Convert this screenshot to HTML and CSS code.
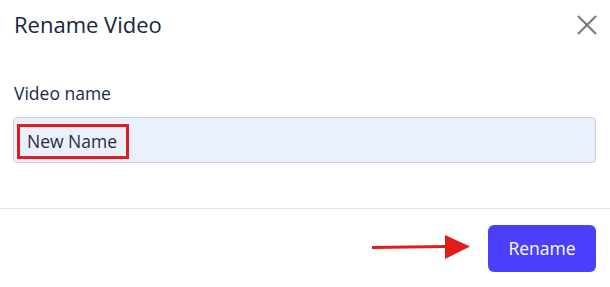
FILE: index.html
```html
<!DOCTYPE html>
<html>
<head>
<meta charset="utf-8">
<link rel="stylesheet" href="styles.css">
</head>
<body>
<div class="dialog">
  <div class="header">
    <h1 class="title">Rename Video</h1>
    <button class="close" aria-label="Close">
      <svg width="20" height="20" viewBox="0 0 20 20"><path d="M1 1L19 19M19 1L1 19" stroke="#777" stroke-width="2" fill="none"/></svg>
    </button>
  </div>
  <div class="body">
    <label class="label">Video name</label>
    <div class="input">
      <span class="value">New Name</span>
    </div>
  </div>
  <div class="footer">
    <svg class="arrow" width="100" height="26" viewBox="0 0 100 26"><path d="M0 13.5L74 12.5" stroke="#e21c1c" stroke-width="3"/><path d="M73 1L98 12.5L73 25Z" fill="#e21c1c"/></svg>
    <button class="btn">Rename</button>
  </div>
</div>
</body>
</html>
```

FILE: styles.css
```css
html, body { margin: 0; padding: 0; background: #fff; }
body { font-family: "Open Sans", Lato, sans-serif; color: #1b2a47; }
.dialog { width: 610px; height: 287px; display: flex; flex-direction: column; }
.header { display: flex; justify-content: space-between; align-items: center; padding: 10px 13px 0 14px; height: 28px; }
.title { margin: 0; font-size: 22px; font-weight: 400; color: #172540; line-height: 28px; }
.close { border: 0; background: none; padding: 0; width: 20px; height: 20px; display: block; margin-top: 1px; }
.close svg { display: block; }
.body { padding: 45px 14px 0 13px; box-sizing: border-box; border-bottom: 1px solid #e3e5e8; height: 171px; }
.label { display: block; font-size: 17.5px; color: #1b2a47; margin-left: 1px; line-height: 20px; }
.input { margin-top: 14px; height: 46px; box-sizing: border-box; background: #eaf1fc; border: 1px solid #c6d0de; border-radius: 4px; display: flex; align-items: center; padding-left: 3px; }
.value { border: 3px solid #e21c1c; padding: 0 0 0 7px; height: 35px; box-sizing: border-box; display: flex; align-items: center; font-size: 17.5px; color: #2a2f3a; width: 112px; margin-top: 2px; white-space: nowrap; }
.footer { flex: 1; display: flex; justify-content: flex-end; align-items: center; padding: 0 14px 0 0; }
.arrow { margin-right: 16px; margin-top: -2px; }
.btn { background: #4b3ffc; color: #fff; border: 0; border-radius: 6px; width: 108px; height: 47px; font-family: "Open Sans", Lato, sans-serif; font-size: 17.5px; margin-top: 0px; }
```
